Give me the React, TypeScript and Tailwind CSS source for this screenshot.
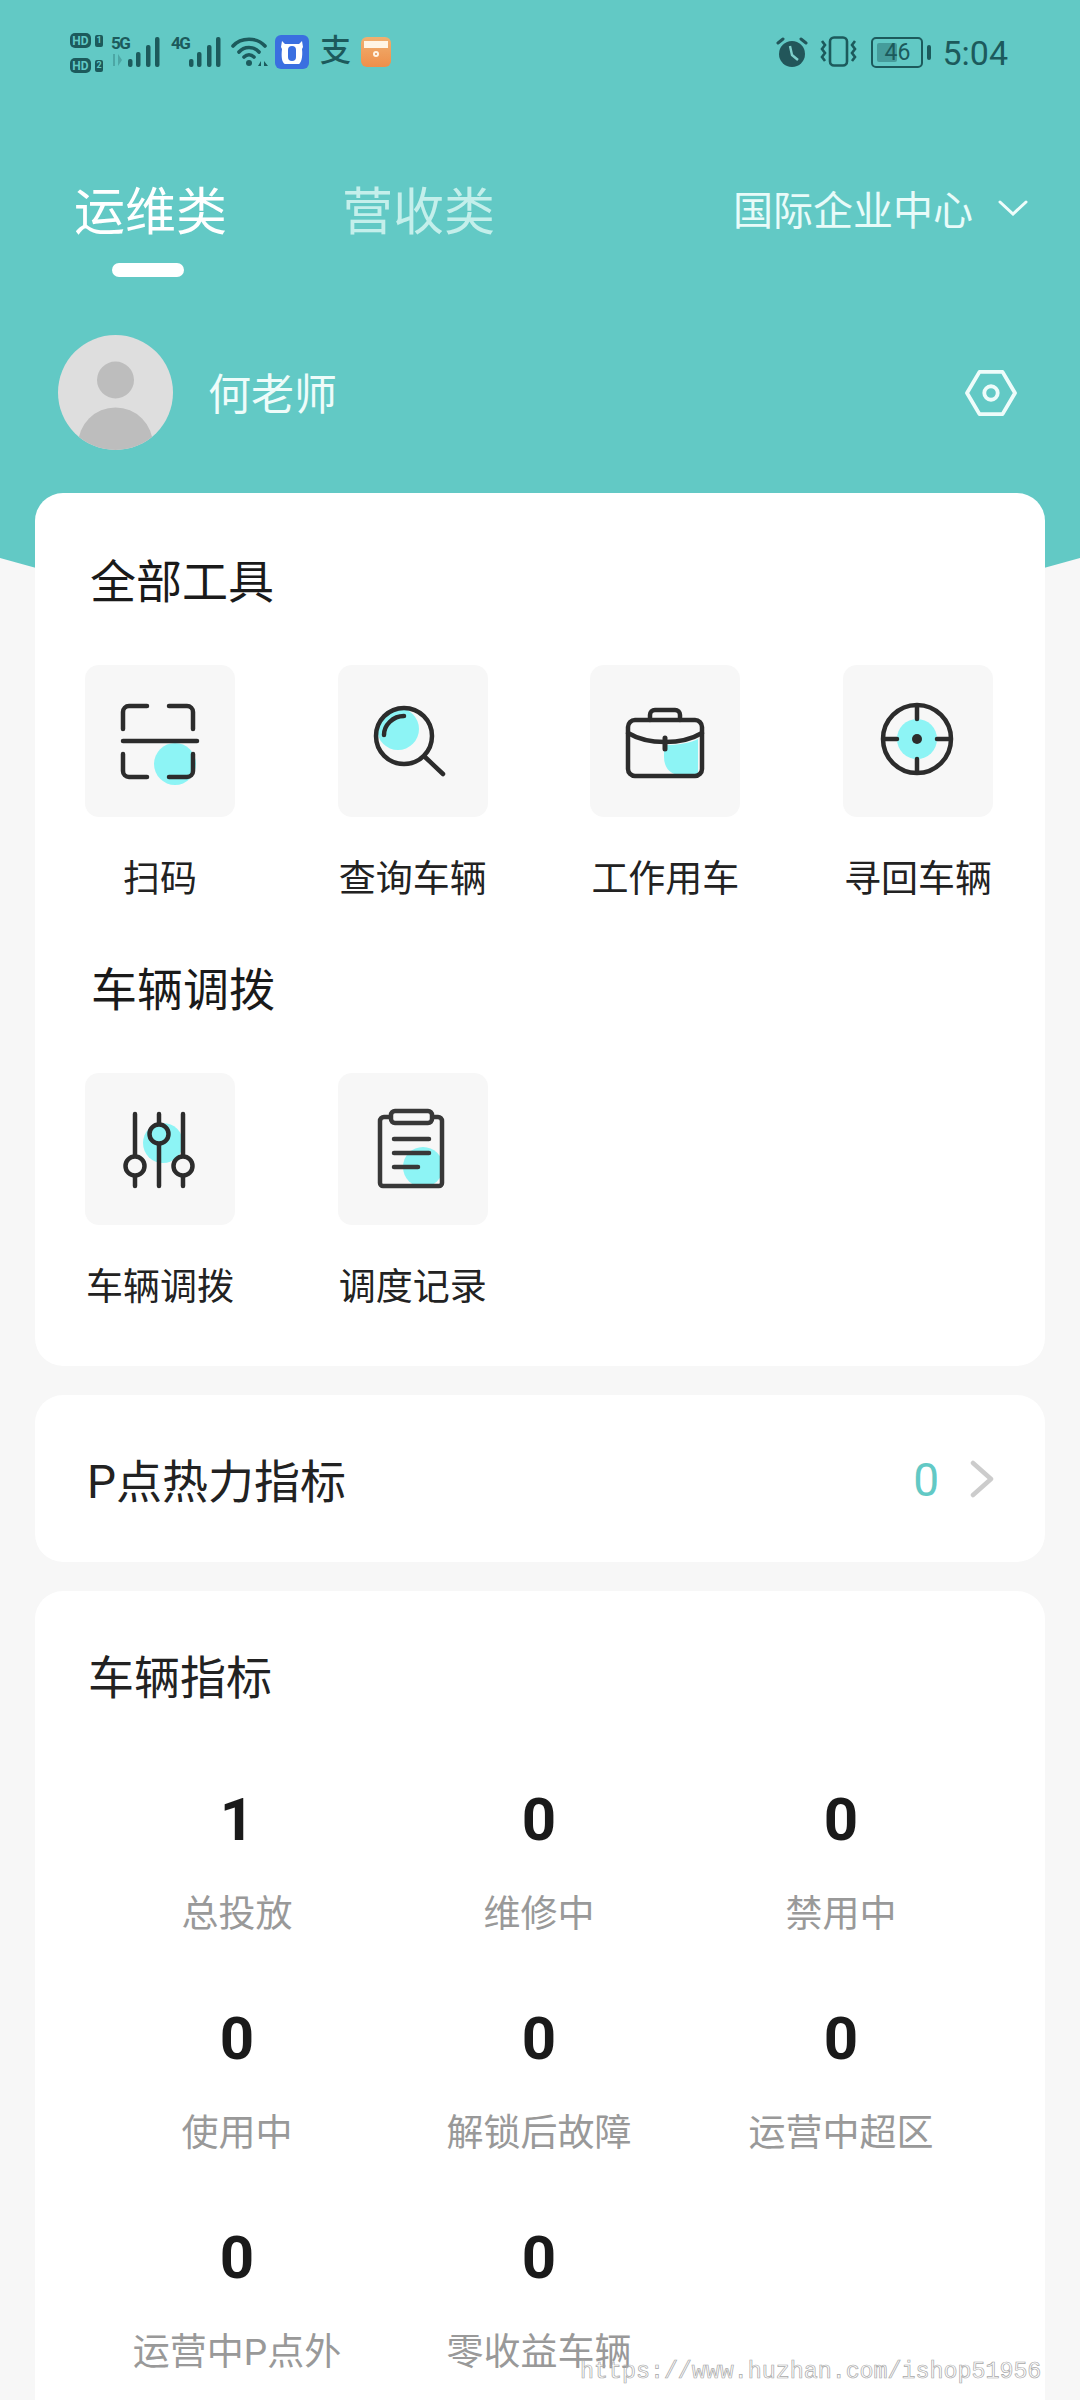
const INK = '#2c2c2c';
const CYAN = '#8df4f5';

function Signal() {
  return (
    <svg width="32" height="30" viewBox="0 0 32 30" fill="#1c5a5c">
      <rect x="0" y="22" width="4.5" height="8" rx="2" />
      <rect x="8" y="15" width="4.5" height="15" rx="2" />
      <rect x="18" y="8" width="4.5" height="22" rx="2" />
      <rect x="27" y="0" width="4.5" height="30" rx="2" />
    </svg>
  );
}

function HdRow({ n }: { n: string }) {
  return (
    <div className="flex items-center gap-[4px]">
      <div className="flex h-[15px] w-[21px] items-center justify-center rounded-[5px] bg-[#1c5a5c] text-[12px] font-bold leading-none text-[#62c9c5]">
        HD
      </div>
      <div className="flex h-[12px] w-[8px] items-center justify-center rounded-[2px] bg-[#1c5a5c] text-[9px] font-bold leading-none text-[#62c9c5]">
        {n}
      </div>
    </div>
  );
}

function StatusBar() {
  return (
    <div className="flex h-[105px] items-start pl-[70px] pr-[72px] pt-[33px] text-[#1c5a5c]">
      <div className="flex h-[40px] w-[41px] flex-col justify-between">
        <HdRow n="1" />
        <HdRow n="2" />
      </div>
      <div className="flex h-[34px] w-[17px] flex-col">
        <span className="text-[17px] font-bold leading-[21px] tracking-[-1.5px]">5G</span>
        <svg width="14" height="12" viewBox="0 0 14 12" fill="#1c5a5c" opacity="0.3">
          <path d="M2 0h2v12H2zM7 0l4 6-4 6z" />
        </svg>
      </div>
      <div className="mt-[4px]">
        <Signal />
      </div>
      <span className="ml-[11px] w-[18px] text-[17px] font-bold leading-[21px] tracking-[-1.5px]">4G</span>
      <div className="mt-[4px]">
        <Signal />
      </div>
      <svg className="ml-[10px] mt-[4px]" width="38" height="30" viewBox="0 0 38 30" fill="none" stroke="#1c5a5c" strokeWidth="3.6" strokeLinecap="round">
        <path d="M2 9C10 0 26 0 34 9" />
        <path d="M8 15C13 9 23 9 28 15" />
        <path d="M13 20C16 17 20 17 23 20" />
        <circle cx="18" cy="26" r="3" fill="#1c5a5c" stroke="none" />
        <path d="M27 29l3-5v5zM33 24l4 5h-4z" fill="#1c5a5c" stroke="none" />
      </svg>
      <svg className="ml-[6px] mt-[2px]" width="34" height="34" viewBox="0 0 34 34">
        <rect width="34" height="34" rx="6" fill="#3a6fe0" />
        <path d="M7 6l3 3h14l3-3 1 6-1 2c1 8-1 14-3 15H10c-3-1-4-7-3-15l-1-2z" fill="#fff" />
        <rect x="13" y="11" width="8" height="15" rx="4" fill="#3a6fe0" />
      </svg>
      <span className="ml-[11px] mt-[2px] w-[31px] text-[31px] font-medium leading-[31px]">支</span>
      <svg className="ml-[10px] mt-[4px]" width="30" height="30" viewBox="0 0 30 30">
        <defs>
          <linearGradient id="wallet" x1="0" y1="0" x2="0" y2="1">
            <stop offset="0" stopColor="#f0b070" />
            <stop offset="1" stopColor="#ee8f4a" />
          </linearGradient>
        </defs>
        <rect width="30" height="30" rx="6" fill="url(#wallet)" />
        <rect x="3" y="4" width="24" height="7" fill="#fff4e4" />
        <circle cx="15" cy="17" r="3" fill="#fff4e4" />
        <circle cx="15" cy="17" r="1" fill="#e88e4c" />
      </svg>

      <svg className="ml-auto mt-[4px]" width="32" height="30" viewBox="0 0 32 30">
        <circle cx="16" cy="17" r="13" fill="#22565a" />
        <path d="M14 9l2 9 6 5" fill="none" stroke="#7fd0cc" strokeWidth="2.4" />
        <path d="M2 6l5-4M30 6l-5-4" stroke="#22565a" strokeWidth="3" strokeLinecap="round" />
      </svg>
      <svg className="ml-[11px] mt-[3px]" width="40" height="31" viewBox="0 0 40 31" fill="none" stroke="#1c5a5c" strokeWidth="2.6">
        <rect x="11" y="1.5" width="17" height="28" rx="4" />
        <path d="M3 5l3 4-3 4 3 4-3 4 3 4" />
        <path d="M36 5l-3 4 3 4-3 4 3 4-3 4" />
      </svg>
      <div className="relative ml-[12px] mt-[4px] flex h-[31px] w-[52px] items-center justify-center rounded-[5px] border-[2.5px] border-[#1c5a5c] text-[23px] leading-none">
        <div className="absolute left-[4px] top-[4px] h-[19px] w-[20px] rounded-[2px] bg-[#1c5a5c] opacity-40" />
        <span className="relative">46</span>
      </div>
      <div className="ml-[4px] mt-[12px] h-[15px] w-[4px] rounded-[2px] bg-[#1c5a5c]" />
      <span className="ml-[11px] text-[34px] leading-[40px]">5:04</span>
    </div>
  );
}

function ScanIcon() {
  return (
    <svg width="150" height="152" viewBox="0 0 150 152" fill="none" stroke={INK} strokeWidth="4.5" strokeLinecap="round">
      <circle cx="90" cy="99" r="21" fill={CYAN} stroke="none" />
      <path d="M62 41H44a6 6 0 0 0-6 6v17" />
      <path d="M84 41h18a6 6 0 0 1 6 6v17" />
      <path d="M38 89v17a6 6 0 0 0 6 6h18" />
      <path d="M108 89v17a6 6 0 0 1-6 6H84" />
      <path d="M38 76h74" />
    </svg>
  );
}

function SearchIcon() {
  return (
    <svg width="150" height="152" viewBox="0 0 150 152" fill="none" stroke={INK} strokeWidth="4.5" strokeLinecap="round">
      <circle cx="60" cy="64" r="21" fill={CYAN} stroke="none" />
      <circle cx="66" cy="71" r="28" />
      <path d="M46 70c0-10 9-19 20-19" />
      <path d="M87 92l18 17" />
    </svg>
  );
}

function BriefcaseIcon() {
  return (
    <svg width="150" height="152" viewBox="0 0 150 152" fill="none" stroke={INK} strokeWidth="4.5" strokeLinecap="round">
      <path d="M74 80c14 0 26-2 34-6v36H90c-10 0-16-8-16-18z" fill={CYAN} stroke="none" />
      <rect x="38" y="55" width="74" height="56" rx="7" />
      <path d="M60 55v-5a5 5 0 0 1 5-5h20a5 5 0 0 1 5 5v5" />
      <path d="M38 68c20 12 54 12 74 0" />
      <path d="M75 73v11" strokeWidth="5" />
    </svg>
  );
}

function TargetIcon() {
  return (
    <svg width="150" height="152" viewBox="0 0 150 152" fill="none" stroke={INK} strokeWidth="4.5" strokeLinecap="round">
      <circle cx="74" cy="74" r="20" fill={CYAN} stroke="none" />
      <circle cx="74" cy="74" r="34" />
      <circle cx="74" cy="74" r="5" fill={INK} stroke="none" />
      <path d="M74 42v12M74 94v12M42 74h12M94 74h12" />
    </svg>
  );
}

function SlidersIcon() {
  return (
    <svg width="150" height="152" viewBox="0 0 150 152" fill="none" stroke={INK} strokeWidth="4.5" strokeLinecap="round">
      <circle cx="78" cy="70" r="20" fill={CYAN} stroke="none" />
      <path d="M50 41v72M74 41v72M98 41v72" />
      <circle cx="50" cy="93" r="9.5" fill="#f7f7f7" />
      <circle cx="98" cy="93" r="9.5" fill="#f7f7f7" />
      <circle cx="74" cy="61" r="9.5" fill={CYAN} />
    </svg>
  );
}

function ClipboardIcon() {
  return (
    <svg width="150" height="152" viewBox="0 0 150 152" fill="none" stroke="#383838" strokeWidth="4.5" strokeLinecap="round">
      <circle cx="85" cy="94" r="20" fill={CYAN} stroke="none" />
      <path d="M52 44h-6a4 4 0 0 0-4 4v62a3 3 0 0 0 3 3h56a3 3 0 0 0 3-3V48a4 4 0 0 0-4-4h-6" />
      <rect x="53" y="38" width="41" height="12" rx="4" fill="#f7f7f7" />
      <path d="M56 66h35M56 80h35M56 94h24" />
    </svg>
  );
}

function Tool({ label, icon }: { label: string; icon: React.ReactNode }) {
  return (
    <div className="flex w-[150px] flex-col items-center">
      <div className="h-[152px] w-[150px] rounded-[14px] bg-[#f7f7f7]">{icon}</div>
      <span className="mt-[44px] whitespace-nowrap text-[37px] leading-[37px] text-[#222]">{label}</span>
    </div>
  );
}

function Stat({ value, label }: { value: number; label: string }) {
  return (
    <div className="flex flex-col items-center">
      <span className="text-[60px] font-bold leading-[60px] text-[#1a1a1a]">{value}</span>
      <span className="mt-[46px] whitespace-nowrap text-[37px] leading-[37px] text-[#999]">{label}</span>
    </div>
  );
}

const stats = [
  { value: 1, label: '总投放' },
  { value: 0, label: '维修中' },
  { value: 0, label: '禁用中' },
  { value: 0, label: '使用中' },
  { value: 0, label: '解锁后故障' },
  { value: 0, label: '运营中超区' },
  { value: 0, label: '运营中P点外' },
  { value: 0, label: '零收益车辆' },
];

export default function App() {
  return (
    <div className="relative h-[2400px] w-[1080px] overflow-hidden bg-[#f7f7f7] font-[Roboto,'Noto_Sans_CJK_SC',sans-serif]">
      {/* Header */}
      <div className="h-[558px] bg-[#62c9c5]">
        <StatusBar />

        <div className="mt-[82px] flex items-start pl-[74px] pr-[52px]">
          <div className="flex flex-col">
            <span className="text-[51px] leading-[51px] text-white">运维类</span>
            <div className="ml-[38px] mt-[25px] h-[14px] w-[72px] rounded-[7px] bg-white" />
          </div>
          <span className="ml-[115px] text-[51px] leading-[51px] text-[#c4efeb]">营收类</span>
          <span className="ml-auto mt-[5px] text-[40px] leading-[40px] text-[#e8fbf9]">国际企业中心</span>
          <svg className="ml-[25px] mt-[13px]" width="30" height="16" viewBox="0 0 30 16" fill="none" stroke="#f0fdfb" strokeWidth="3" strokeLinecap="round">
            <path d="M2 2l13 12L28 2" />
          </svg>
        </div>

        <div className="mt-[58px] flex items-center pl-[58px] pr-[63px]">
          <svg width="115" height="115" viewBox="0 0 115 115">
            <defs>
              <clipPath id="avatar">
                <circle cx="57.5" cy="57.5" r="57.5" />
              </clipPath>
            </defs>
            <circle cx="57.5" cy="57.5" r="57.5" fill="#dedede" />
            <circle cx="57.5" cy="45" r="18.5" fill="#bdbdbd" />
            <circle cx="57.5" cy="110" r="37.5" fill="#bdbdbd" clipPath="url(#avatar)" />
          </svg>
          <span className="ml-[35px] mt-[5px] text-[43px] leading-[43px] text-[#eefcfa]">何老师</span>
          <svg className="ml-auto" width="52" height="48" viewBox="0 0 54 50" fill="none" stroke="#eefcfa" strokeWidth="4" strokeLinejoin="round">
            <path d="M15 3h24l13 22-13 22H15L2 25z" />
            <circle cx="27" cy="25" r="7" />
          </svg>
        </div>
      </div>

      {/* Curved bottom edge of the header */}
      <svg className="block h-[77px] w-[1080px]" viewBox="0 0 1080 77">
        <path d="M0 0H1080Q540 154 0 0Z" fill="#62c9c5" />
      </svg>

      <div className="relative -mt-[142px] flex flex-col gap-[29px] px-[35px]">
        <div className="h-[873px] rounded-[28px] bg-white pl-[50px] pt-[66px]">
          <h2 className="ml-[5px] text-[46px] font-normal leading-[46px] text-[#1a1a1a]">全部工具</h2>
          <div className="mt-[60px] grid grid-cols-[repeat(4,150px)] gap-x-[102.7px]">
            <Tool label="扫码" icon={<ScanIcon />} />
            <Tool label="查询车辆" icon={<SearchIcon />} />
            <Tool label="工作用车" icon={<BriefcaseIcon />} />
            <Tool label="寻回车辆" icon={<TargetIcon />} />
          </div>
          <h2 className="ml-[6px] mt-[69px] text-[46px] font-normal leading-[46px] text-[#1a1a1a]">车辆调拨</h2>
          <div className="mt-[60px] grid grid-cols-[repeat(4,150px)] gap-x-[102.7px]">
            <Tool label="车辆调拨" icon={<SlidersIcon />} />
            <Tool label="调度记录" icon={<ClipboardIcon />} />
          </div>
        </div>

        <div className="flex h-[167px] items-center rounded-[28px] bg-white pl-[52px] pr-[50px]">
          <span className="mt-[7px] text-[46px] leading-[46px] text-[#222]">P点热力指标</span>
          <span className="ml-auto mt-[3px] text-[46px] leading-[46px] text-[#62c9c5]">0</span>
          <svg className="ml-[30px]" width="26" height="38" viewBox="0 0 26 38" fill="none" stroke="#cccccc" strokeWidth="4.5" strokeLinecap="round" strokeLinejoin="round">
            <path d="M4 3l18 16L4 35" />
          </svg>
        </div>

        <div className="h-[900px] rounded-[28px] bg-white pt-[64px]">
          <h2 className="ml-[53px] text-[46px] font-normal leading-[46px] text-[#222]">车辆指标</h2>
          <div className="ml-[51px] mt-[89px] grid w-[906px] grid-cols-3 gap-y-[76px]">
            {stats.map((stat) => (
              <Stat key={stat.label} value={stat.value} label={stat.label} />
            ))}
          </div>
        </div>
      </div>

      {/* Watermark over the page */}
      <span className="absolute left-[580px] top-[2358px] whitespace-nowrap font-['Liberation_Mono',monospace] text-[23.3px] leading-[28px] text-transparent [-webkit-text-stroke:0.7px_#a8a8a8]">
        https://www.huzhan.com/ishop51956
      </span>
    </div>
  );
}
